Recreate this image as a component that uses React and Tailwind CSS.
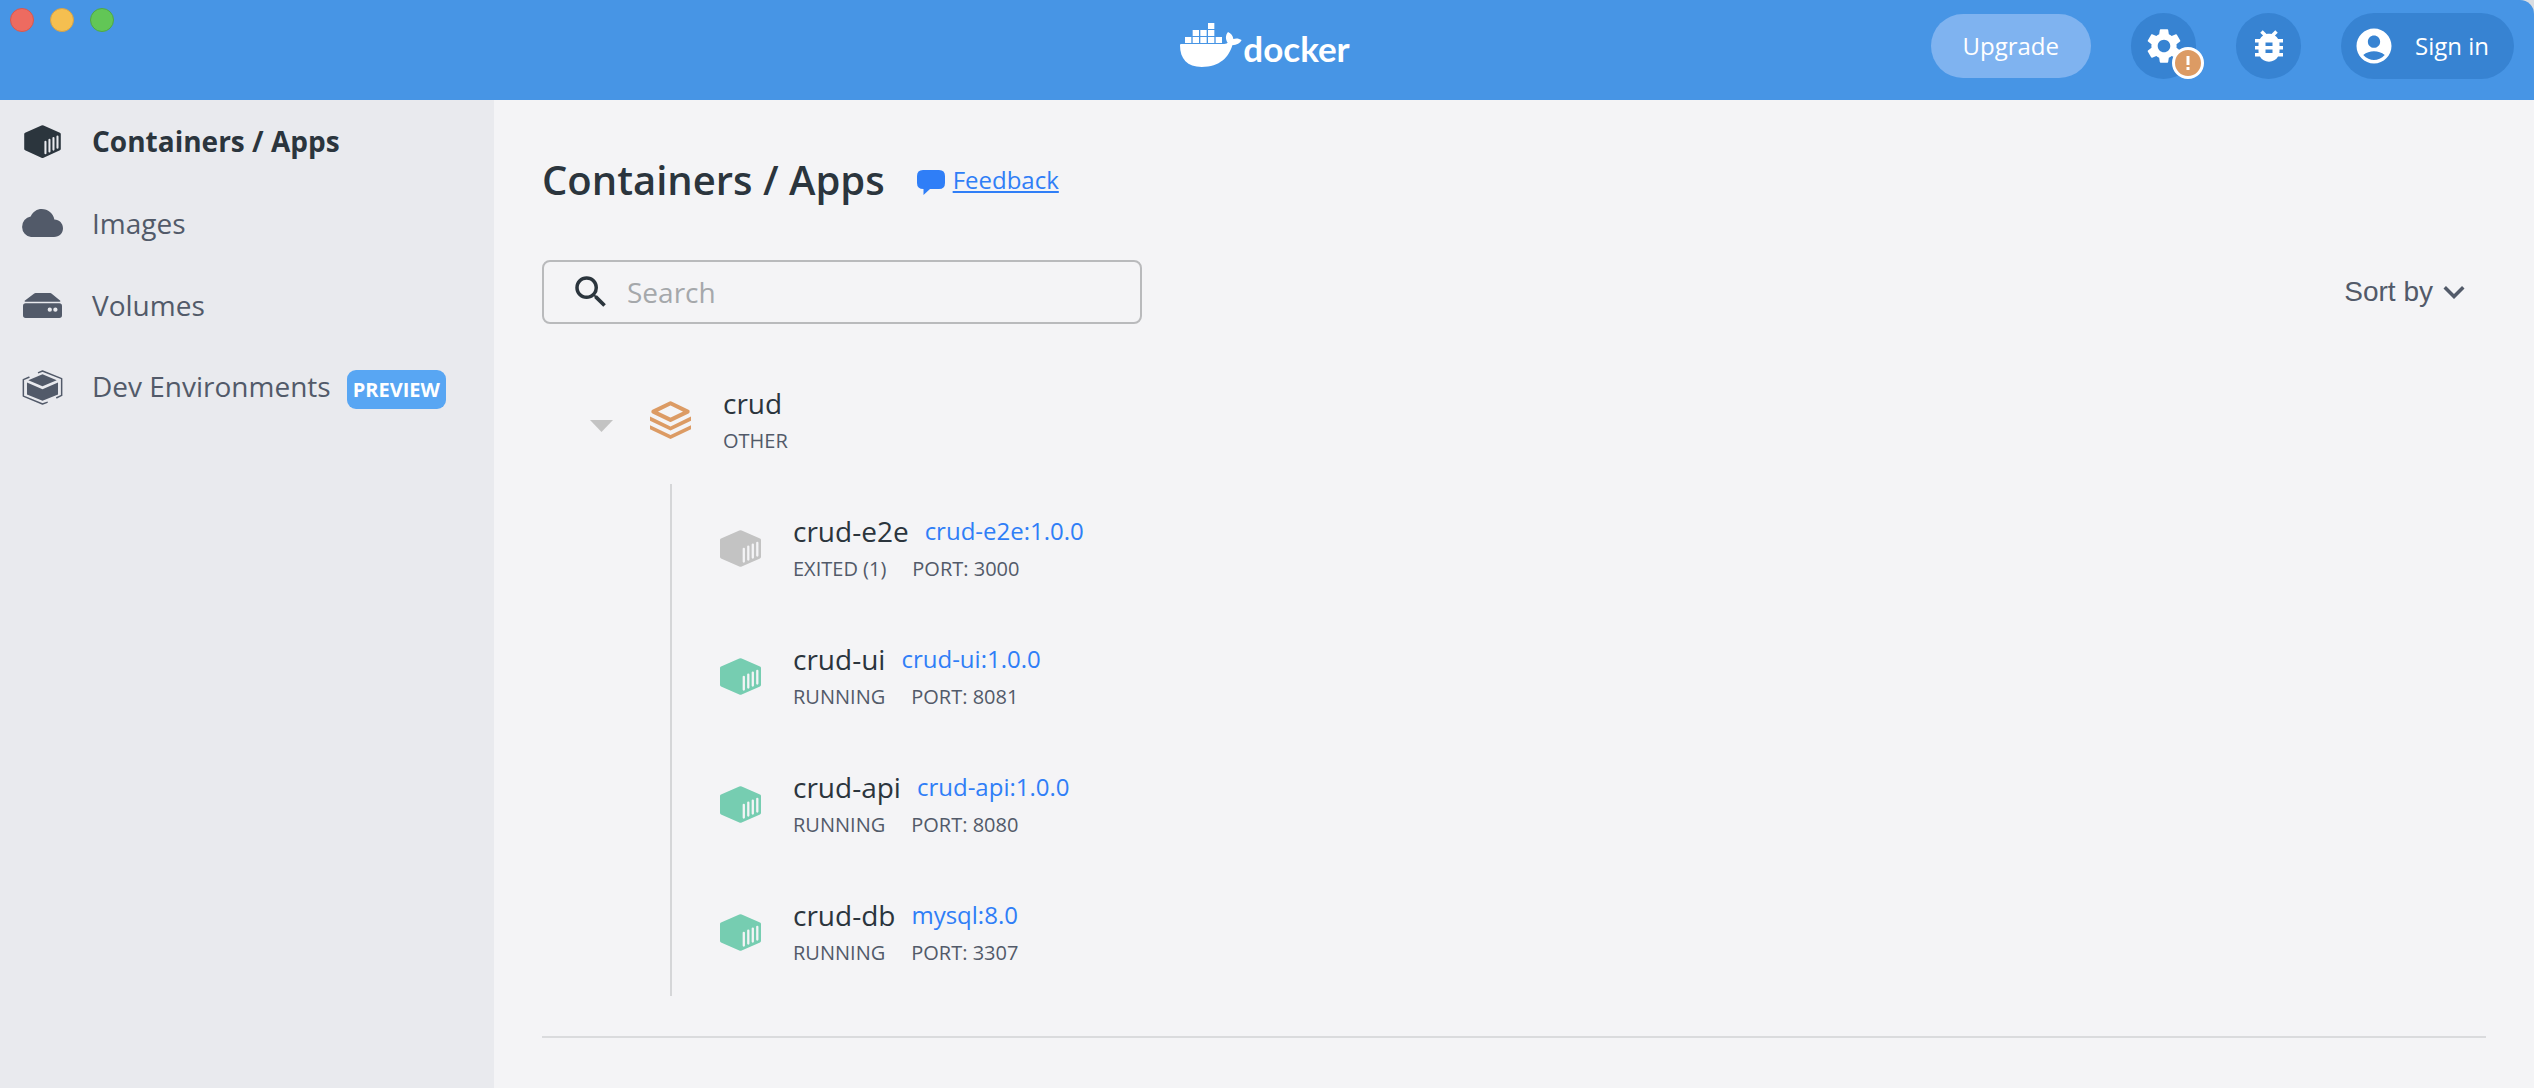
import React from "react";
import {
  MdAccountCircle,
  MdBugReport,
  MdKeyboardArrowDown,
  MdSearch,
  MdSettings,
} from "react-icons/md";

const containers = [
  { name: "crud-e2e", image: "crud-e2e:1.0.0", status: "EXITED (1)", port: 3000, running: false },
  { name: "crud-ui", image: "crud-ui:1.0.0", status: "RUNNING", port: 8081, running: true },
  { name: "crud-api", image: "crud-api:1.0.0", status: "RUNNING", port: 8080, running: true },
  { name: "crud-db", image: "mysql:8.0", status: "RUNNING", port: 3307, running: true },
];

function CubeIcon({ className, slot }) {
  return (
    <svg viewBox="0 0 41 37" className={className} aria-hidden="true">
      <path
        d="M19.3 .5a3 3 0 0 1 2.4 0L40 8.6a1.6 1.6 0 0 1 1 1.4V27a1.6 1.6 0 0 1-1 1.4L21.7 36.6a3 3 0 0 1-2.4 0L1 28.4A1.6 1.6 0 0 1 0 27V10a1.6 1.6 0 0 1 1-1.4Z"
        fill="currentColor"
      />
      <path
        d="M23.8 18.8V31.6M28.3 16.6V29.6M32.8 14.6V27.6M37.3 12.8V25.6"
        fill="none"
        strokeWidth="2.3"
        strokeLinecap="round"
        className={slot}
      />
    </svg>
  );
}

function CloudIcon() {
  return (
    <svg viewBox="0 0 126 84" className="h-7 w-[42px]" fill="currentColor" aria-hidden="true">
      <path d="M30 84A30 31 0 0 1 29 22.500C36 8 48 0 62 0C81 0 97 13 100 31.500C115 32 126 43 126 58C126 73 115 84 99 84Z" />
    </svg>
  );
}

function VolumeIcon() {
  return (
    <svg viewBox="0 0 118 75" className="h-[25px] w-[39px]" fill="currentColor" aria-hidden="true">
      <path d="M34 1Q36 0 38 0H82Q85 0 87 2L113 23Q114 26 111 26H7Q4 26 5 23Z" />
      <path
        fillRule="evenodd"
        d="M8 31H110Q118 31 118 39V67Q118 75 110 75H8Q0 75 0 67V39Q0 31 8 31ZM81 43.500a6.500 6.500 0 1 0 0 13a6.500 6.500 0 1 0 0-13ZM98 43.500a6.500 6.500 0 1 0 0 13a6.500 6.500 0 1 0 0-13Z"
      />
    </svg>
  );
}

function DevIcon() {
  return (
    <svg viewBox="0 0 122 106" className="h-[35px] w-[41px]" aria-hidden="true">
      <path d="M18 31L61 13L104 31L61 49Z" fill="currentColor" />
      <path d="M14 38L61 58L108 38V74L61 93L14 74Z" fill="currentColor" />
      <path
        d="M49 8L61 3L119 26V77L104 84M20 22L3 29V79L61 103L75 98"
        fill="none"
        stroke="currentColor"
        strokeWidth="4.500"
        strokeLinecap="round"
        strokeLinejoin="round"
      />
    </svg>
  );
}

function StackIcon() {
  return (
    <svg viewBox="0 0 41 38" className="h-[38px] w-[41px] text-[#dc9b64]" aria-hidden="true">
      <path
        d="M20.500 2.300L37.700 10.600L20.500 18.900L3.300 10.600Z"
        fill="none"
        stroke="currentColor"
        strokeWidth="4"
        strokeLinejoin="round"
      />
      <path
        d="M0 15.600L20.500 25.400L41 15.600V19.700L20.500 29.500L0 19.700ZM0 24.200L20.500 34L41 24.200V28.300L20.500 38L0 28.300Z"
        fill="currentColor"
      />
    </svg>
  );
}

function WhaleIcon() {
  return (
    <svg viewBox="54 69 186 132" className="h-11 w-[62px]" fill="currentColor" aria-hidden="true">
      <path d="M138 69h19v18h-19zM92 90h19v18h-19zM115 90h19v18h-19zM138 90h19v18h-19zM69 111h19v18h-19zM92 111h19v18h-19zM115 111h19v18h-19zM138 111h19v18h-19zM161 111h19v18h-19z" />
      <path d="M57 132H182C188 132 193 131 197 128C190 118 190 106 198 96C207 100 213 107 214 117C222 114 231 115 239 120C234 130 225 135 211 136C201 171 174 201 119 201C76 201 54 177 54 136Q54 132 57 132Z" />
    </svg>
  );
}

const navItems = [
  { label: "Containers / Apps", active: true, icon: <CubeIcon className="h-[33px] w-[37px]" slot="stroke-[#e9eaee]" /> },
  { label: "Images", icon: <CloudIcon /> },
  { label: "Volumes", icon: <VolumeIcon /> },
  { label: "Dev Environments", icon: <DevIcon />, badge: "PREVIEW" },
];

function Header() {
  return (
    <header className="grid h-[100px] grid-cols-[1fr_auto_1fr] rounded-tr-[14px] bg-[#4795e5] text-white">
      <div className="flex gap-4 pt-2 pl-[10px]">
        <button aria-label="Close" className="size-6 rounded-full border border-[#d6584f] bg-[#ed6b60]" />
        <button aria-label="Minimize" className="size-6 rounded-full border border-[#d3a14a] bg-[#f5bf50]" />
        <button aria-label="Zoom" className="size-6 rounded-full border border-[#4fa745] bg-[#62c656]" />
      </div>
      <div className="flex h-[90px] items-center pr-1">
        <WhaleIcon />
        <span className="pt-[6px] pl-px font-[Lato,sans-serif] text-[35px] leading-[44px] font-bold">docker</span>
      </div>
      <div className="flex h-[92px] items-center justify-end pr-5 text-2xl">
        <button className="h-16 rounded-full bg-[#7fb3f0] px-8">Upgrade</button>
        <button aria-label="Settings" className="relative ml-10 flex h-[66px] w-[65px] items-center justify-center rounded-full bg-[#3783d2]">
          <MdSettings className="size-[42px]" />
          <span className="absolute -right-2 bottom-0 flex size-8 items-center justify-center rounded-full border-[3px] border-white bg-[#dc9b64]">
            <svg viewBox="0 0 4 14" className="h-[14px] w-1" fill="currentColor" aria-hidden="true">
              <path d="M.500 0h3v9h-3zM.500 11h3v3h-3z" />
            </svg>
          </span>
        </button>
        <button aria-label="Troubleshoot" className="ml-10 flex h-[66px] w-[65px] items-center justify-center rounded-full bg-[#3783d2]">
          <MdBugReport className="size-[42px]" />
        </button>
        <button className="ml-10 flex h-[66px] items-center gap-5 rounded-full bg-[#3783d2] pr-[25px] pl-3">
          <MdAccountCircle className="size-[42px]" />
          Sign in
        </button>
      </div>
    </header>
  );
}

function Sidebar() {
  return (
    <nav className="w-[494px] shrink-0 bg-[#e9eaee]">
      {navItems.map((item) => (
        <a
          key={item.label}
          href="#"
          className={
            item.active
              ? "flex h-[82px] items-center gap-7 pl-5 text-[28px] font-bold text-[#2b353d]"
              : "flex h-[82px] items-center gap-7 pl-5 text-[28px] text-[#525a69]"
          }
        >
          <span className="flex w-11 justify-center">{item.icon}</span>
          <span className="flex items-baseline gap-4">
            {item.label}
            {item.badge && (
              <span className="rounded-[9px] bg-[#58a6f3] px-[6px] text-xl leading-[39px] font-bold text-white">
                {item.badge}
              </span>
            )}
          </span>
        </a>
      ))}
    </nav>
  );
}

function ContainerRow({ item }) {
  return (
    <li className="flex h-32 items-center gap-8 pl-12">
      <CubeIcon
        className={item.running ? "h-[37px] w-[41px] text-[#76cdb1]" : "h-[37px] w-[41px] text-[#c3c3c3]"}
        slot="stroke-[#f4f4f6]"
      />
      <div className="pt-[2px]">
        <div className="flex gap-4 text-[28px] leading-10 text-[#2b353d]">
          <span>{item.name}</span>
          <a href="#" className="text-2xl leading-10 text-[#2f7ef7]">{item.image}</a>
        </div>
        <div className="flex gap-[26px] text-xl leading-9 text-[#525a69]">
          <span>{item.status}</span>
          <span>PORT: {item.port}</span>
        </div>
      </div>
    </li>
  );
}

function Main() {
  return (
    <main className="flex-1 bg-[#f4f4f6] px-12 pt-[52px]">
      <div className="flex items-center gap-8">
        <h1 className="text-[40px] leading-[56px] font-semibold text-[#2b353d]">Containers / Apps</h1>
        <a href="#" className="flex items-center gap-2 text-2xl text-[#2f7ef7]">
          <svg viewBox="0 0 28 25" className="mt-1 h-[25px] w-7" fill="currentColor" aria-hidden="true">
            <path d="M6 0H22Q28 0 28 6V13Q28 19 22 19H13L6.500 25V19Q0 19 0 13V6Q0 0 6 0Z" />
          </svg>
          <span className="underline decoration-2 underline-offset-2">Feedback</span>
        </a>
      </div>

      <div className="mt-[52px] flex items-center justify-between">
        <label className="flex h-16 w-[600px] items-center gap-[15px] rounded-lg border-2 border-[#b9babc] pr-4 pl-[26px]">
          <MdSearch className="size-[42px] text-[#2b353d]" />
          <input
            type="text"
            aria-label="Search"
            placeholder="Search"
            className="min-w-0 flex-1 bg-transparent text-[28px] text-[#2b353d] outline-none placeholder:text-[#a5a8ab]"
          />
        </label>
        <button className="mr-[11px] flex items-center font-['Liberation_Sans',sans-serif] text-[28px] text-[#525a69]">
          Sort by
          <MdKeyboardArrowDown className="size-[42px]" />
        </button>
      </div>

      <section className="mt-8 border-b-2 border-[#dadbdd] pb-10">
        <div className="flex h-32 items-center pl-12">
          <button aria-label="Collapse crud" className="mt-3">
            <svg viewBox="0 0 23 12" className="h-3 w-[23px] text-[#c3c3c3]" fill="currentColor" aria-hidden="true">
              <path d="M0 0H23L11.500 12Z" />
            </svg>
          </button>
          <div className="ml-[37px]">
            <StackIcon />
          </div>
          <div className="ml-8 pt-[2px]">
            <div className="text-[28px] leading-10 text-[#2b353d]">crud</div>
            <div className="text-xl leading-9 text-[#525a69]">OTHER</div>
          </div>
        </div>
        <ul className="ml-32 border-l-2 border-[#d5d6d8]">
          {containers.map((item) => (
            <ContainerRow key={item.name} item={item} />
          ))}
        </ul>
      </section>
    </main>
  );
}

export default function App() {
  return (
    <div className="flex min-h-screen flex-col bg-[#d9dde2] font-['Open_Sans',sans-serif]">
      <Header />
      <div className="flex flex-1">
        <Sidebar />
        <Main />
      </div>
    </div>
  );
}
